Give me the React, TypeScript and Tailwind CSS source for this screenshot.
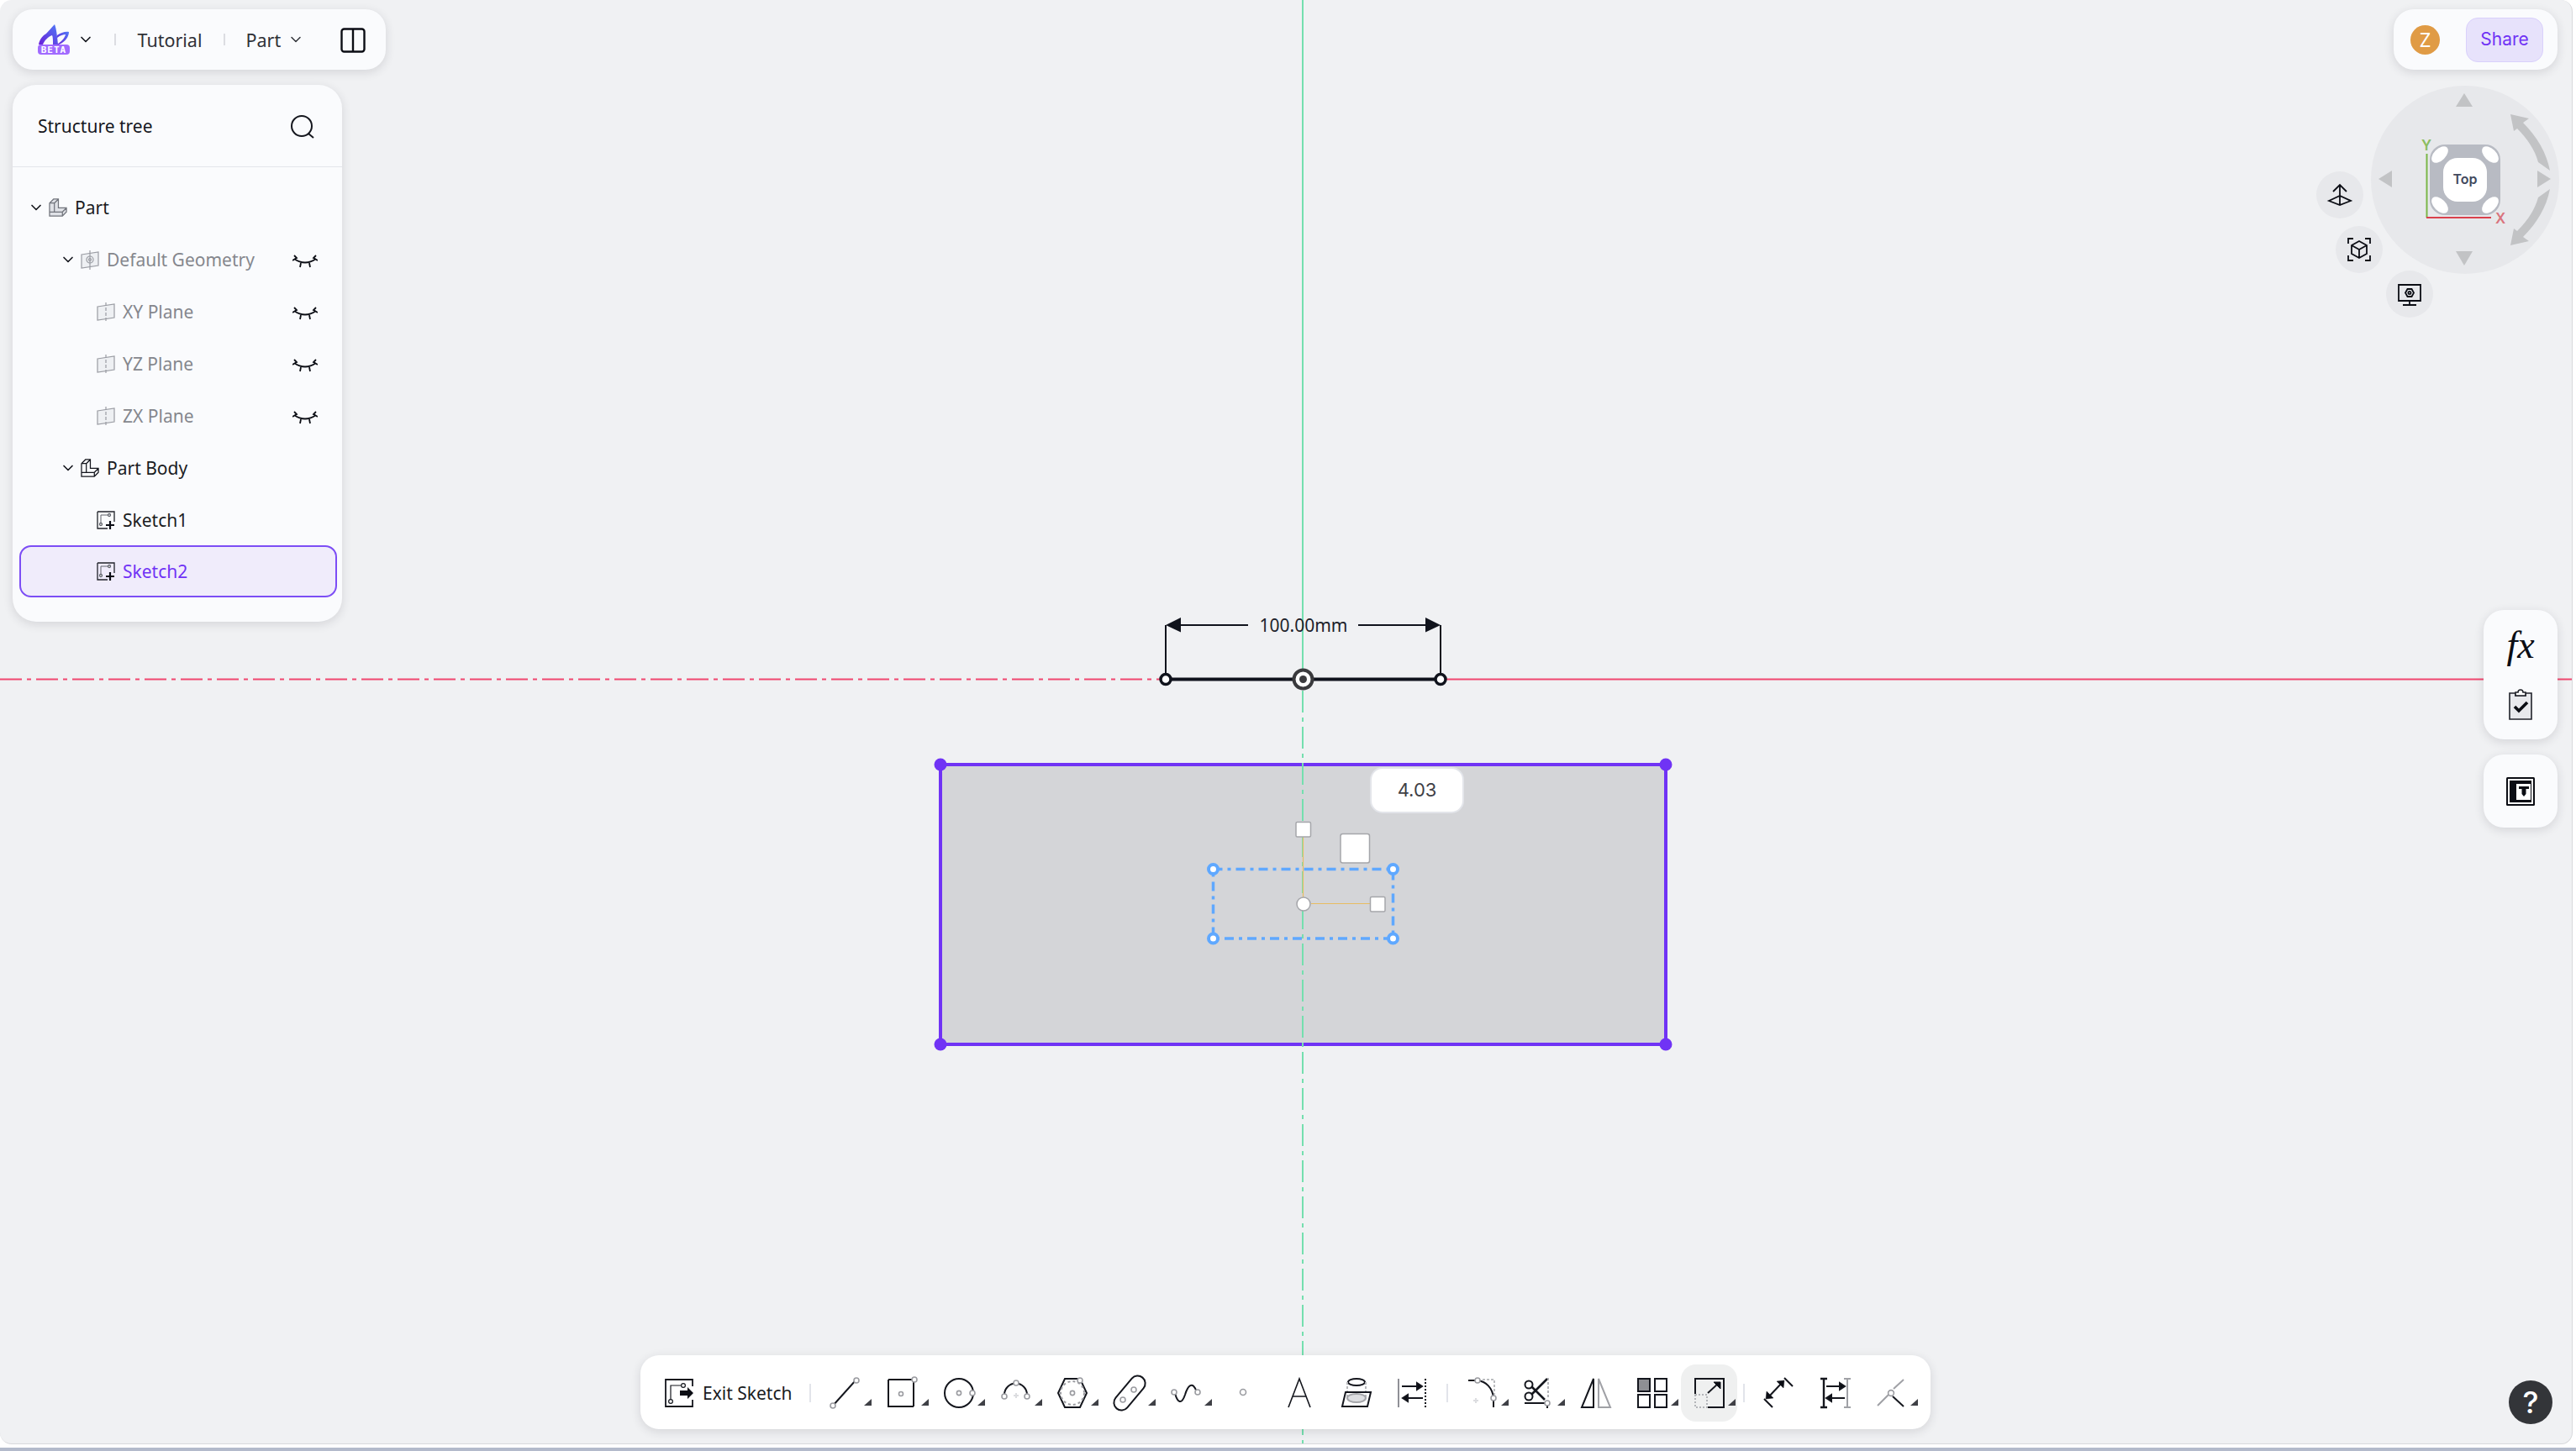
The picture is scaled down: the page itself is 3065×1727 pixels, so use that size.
import React from 'react';
import { ChevronDown } from 'lucide-react';

const font = { fontFamily: '"Noto Sans", sans-serif' };

const Caret = () => (
  <svg width="9" height="8" viewBox="0 0 9 8" className="absolute left-[56px] top-[41px]">
    <path d="M9 0V8H0Z" fill="#3f4046" />
  </svg>
);

const Dot = ({ x, y, r = 3 }: { x: number; y: number; r?: number }) => (
  <circle cx={x} cy={y} r={r} fill="#fff" stroke="#9b9ca1" strokeWidth="1.6" />
);

const Closed = () => (
  <svg width="30" height="16" viewBox="0 0 30 16" fill="none" stroke="#0b0d14" strokeWidth="1.8" className="mt-[4px]">
    <path d="M2 5Q15 14 28 5M0 7L5 4L2 1M30 7L25 4L28 1M10 10L9 15M20 10L21 15" />
  </svg>
);

const PlaneIcon = ({ target }: { target?: boolean }) => (
  <svg width="22" height="23" viewBox="0 0 22 23" fill="none" stroke="#9a9ca3" strokeWidth="1.2">
    <path d="M1 5L21 2V18L1 21Z" fill="#eef0f3" />
    <path d="M11 0V23" strokeDasharray={target ? undefined : '4 2'} />
    {target && <circle cx="11" cy="11" r="4" />}
    {target && <circle cx="11" cy="11" r="1.5" />}
  </svg>
);

const BodyIcon = ({ dim }: { dim?: boolean }) => (
  <svg width="22" height="22" viewBox="0 0 23 23" fill={dim ? '#dfe1e6' : 'none'} stroke={dim ? '#71747c' : '#14161d'} strokeWidth="1.3">
    <path d="M1 22V6L6 1H12V12H22V17L17 22ZM1 6H7V17H1M7 6L12 1M7 17H17V22M17 17L22 12" />
  </svg>
);

const SketchIcon = () => (
  <svg width="22" height="22" viewBox="0 0 22 22" fill="none" stroke="#20222a" strokeWidth="1.3">
    <path d="M1 1H21V13M13 21H1V1" />
    <path d="M5 16V5H15" strokeWidth="1" stroke="#60636b" />
    <circle cx="5" cy="16" r="1.5" stroke="#60636b" fill="#fff" />
    <circle cx="15" cy="5" r="1.5" stroke="#60636b" fill="#fff" />
    <path d="M16 12V22M11 17H21" strokeWidth="2.2" stroke="#0b0d14" />
  </svg>
);

const Chevron = () => <ChevronDown size={20} strokeWidth={2} className="text-[#15171e]" />;

const rows = [
  { label: 'Part', pad: 'pl-[17.5px]', chev: true, icon: <BodyIcon dim />, text: 'text-[#1a1c22]' },
  { label: 'Default Geometry', pad: 'pl-[55.5px]', chev: true, icon: <PlaneIcon target />, text: 'text-[#85878d]', eye: true },
  { label: 'XY Plane', pad: 'pl-[100px]', icon: <PlaneIcon />, text: 'text-[#85878d]', eye: true },
  { label: 'YZ Plane', pad: 'pl-[100px]', icon: <PlaneIcon />, text: 'text-[#85878d]', eye: true },
  { label: 'ZX Plane', pad: 'pl-[100px]', icon: <PlaneIcon />, text: 'text-[#85878d]', eye: true },
  { label: 'Part Body', pad: 'pl-[55.5px]', chev: true, icon: <BodyIcon />, text: 'text-[#1a1c22]' },
  { label: 'Sketch1', pad: 'pl-[100px]', icon: <SketchIcon />, text: 'text-[#1a1c22]' },
];

const Row = ({ row }: { row: (typeof rows)[number] }) => (
  <div className={`flex h-[62px] items-center gap-[9px] pr-[29px] ${row.pad}`}>
    {row.chev && <span className="-mr-[3.5px] flex w-[20px]"><Chevron /></span>}
    {row.icon}
    <span className={`mt-[2px] text-[21px] ${row.text}`}>{row.label}</span>
    {row.eye && <span className="ml-auto flex"><Closed /></span>}
  </div>
);

type ToolDef = { icon: React.ReactNode; caret?: boolean; active?: boolean };

const s = { fill: 'none', stroke: '#14161d', strokeWidth: 2 };

const tools: ToolDef[] = [
  { caret: true, icon: <g {...s}><path d="M3 33L30 3" /><Dot x={3} y={33} r={3} /><Dot x={31} y={3} r={3} /></g> },
  { caret: true, icon: <g {...s}><path d="M1 2H31M31 34H1V2M31 2V34" /><Dot x={16} y={19} r={2.5} /><Dot x={32} y={2} r={3} /></g> },
  { caret: true, icon: <g {...s}><circle cx="18" cy="18" r="17" /><Dot x={18} y={18} r={2.6} /><Dot x={34} y={18} r={3} /></g> },
  { caret: true, icon: <g {...s}><path d="M4 20A13.5 13.5 0 0 1 31 20" /><path d="M18 18V24M15 21H21" stroke="#dcdde0" /><Dot x={4} y={22} r={3} /><Dot x={18} y={6} r={3} /><Dot x={31} y={22} r={3} /></g> },
  { caret: true, icon: <g {...s}><path d="M9 1H27L35 18L27 35H9L1 18Z" /><circle cx="18" cy="18" r="14" stroke="#9b9ca1" strokeDasharray="3 3" /><Dot x={18} y={18} r={2.6} /><Dot x={27} y={3} r={3} /></g> },
  { caret: true, icon: <g {...s}><rect x="-6" y="9" width="48" height="18" rx="9" transform="rotate(-50 18 18)" /><Dot x={23} y={14} r={3} /><Dot x={10} y={26} r={3} /></g> },
  { caret: true, icon: <g {...s}><path d="M5 18C8 30 13 32 17 20C20 10 26 2 31 17" /><Dot x={4} y={17} r={3} /><Dot x={32} y={17} r={3} /></g> },
  { icon: <Dot x={18} y={17} r={3.5} /> },
  { icon: <path d="M5 35L18 1L31 35M10 22H26" fill="none" stroke="#14161d" strokeWidth="1.6" /> },
  { icon: <g {...s}><ellipse cx="18" cy="5" rx="10" ry="4" /><path d="M7 5V24M29 5V24" stroke="#b5b6ba" strokeDasharray="3 2" /><path d="M5 17H35L31 34H1Z" /><ellipse cx="18" cy="24" rx="11" ry="5" stroke="#a5a6aa" fill="#dedfe2" /></g> },
  { icon: <g {...s}><path d="M1 1V35" stroke="#8f9096" /><path d="M33 1V35" strokeDasharray="2 2" /><path d="M5 10H25M30 24H10" /><path d="M23 6L29 10L23 14ZM12 20L6 24L12 28Z" fill="#0b0d14" /></g> },
];

const tools2: ToolDef[] = [
  { caret: true, icon: <g {...s}><path d="M1 3H12C22 4 30 12 31 24V35" /><path d="M18 2H32V20" stroke="#a5a6aa" strokeDasharray="3 2" strokeWidth="1.5" /><path d="M10 24V30M7 27H13" stroke="#dcdde0" /><Dot x={12} y={3} r={3} /><Dot x={31} y={24} r={3} /></g> },
  { caret: true, icon: <g {...s}><circle cx="6" cy="8" r="4.5" /><circle cx="6" cy="22" r="4.5" /><path d="M9 20L28 1M9 10L25 26" strokeWidth="2.6" /><path d="M29 0V24" stroke="#9b9ca1" strokeDasharray="3 2" strokeWidth="1.5" /><path d="M1 30H28M28 30V36" /><Dot x={28} y={30} r={3} /></g> },
  { icon: <g {...s}><path d="M15 1V35H1Z" /><path d="M21 1V35H35Z" stroke="#a0a1a6" /></g> },
  { caret: true, icon: <g {...s}><rect x="1" y="1" width="14" height="15" fill="#8e8f94" /><rect x="21" y="1" width="14" height="15" /><rect x="1" y="20" width="14" height="15" /><rect x="21" y="20" width="14" height="15" /></g> },
  { caret: true, active: true, icon: <g {...s}><path d="M1 19V1H35V35H16" /><path d="M1 20H15V35H1Z" stroke="#a0a1a6" strokeDasharray="2 2" strokeWidth="1.5" /><path d="M16 18L29 6" /><path d="M23 5H31V13Z" fill="#0b0d14" strokeWidth="1" /></g> },
];

const tools3: ToolDef[] = [
  { icon: <g {...s}><path d="M5 24L23 5" /><path d="M25 0L35 10M1 25L11 35" /><path d="M25 3L24 12L16 4ZM3 25L4 16L12 24Z" fill="#0b0d14" strokeWidth="0.5" /></g> },
  { icon: <g {...s}><path d="M4 1V35M0 1H8M0 35H8" strokeWidth="2.4" /><path d="M32 1V35M28 1H36M28 35H36" stroke="#a0a1a6" /><path d="M7 10H25M29 24H11" /><path d="M23 6L29 10L23 14ZM13 20L7 24L13 28Z" fill="#0b0d14" /></g> },
  { caret: true, icon: <g {...s}><path d="M1 33L15 19M20 13L32 2" stroke="#a0a1a6" /><path d="M19 22L32 34" /><Dot x={17} y={18} r={3.4} /></g> },
];

const Tool = ({ tool }: { tool: ToolDef }) => (
  <div className="relative flex h-[68px] w-[67.5px] items-center justify-center">
    {tool.active && <div className="absolute inset-0 rounded-[18px] bg-[#eff0f0]" />}
    <svg width="36" height="36" viewBox="0 0 36 36" className="relative overflow-visible">{tool.icon}</svg>
    {tool.caret && <Caret />}
  </div>
);

const Sep = () => <div className="mx-[6.5px] h-[22px] w-[2px] bg-[#e2e4ea]" />;

const panel = 'bg-[#fafbfd] shadow-[0_3px_12px_rgba(40,44,60,0.14)]';

const Canvas = () => (
  <svg width="3060" height="1719" viewBox="0 0 3060 1719" className="absolute left-0 top-0">
    <path d="M0 808.5H1387" stroke="#f0476f" strokeWidth="2" strokeDasharray="26 6 5 6" fill="none" />
    <path d="M1714 808.5H3060" stroke="#f0476f" strokeWidth="2" fill="none" />
    <rect x="1119" y="910" width="863" height="333" fill="#d4d5d8" stroke="#7033f5" strokeWidth="4" />
    <path d="M1550 0V808" stroke="#74dfae" strokeWidth="2" fill="none" />
    <path d="M1550 822V1719" stroke="#74dfae" strokeWidth="2" strokeDasharray="26 6 5 6" fill="none" />
    {[[1119, 910], [1982, 910], [1119, 1243], [1982, 1243]].map(([x, y]) => (
      <circle key={`${x}-${y}`} cx={x} cy={y} r="7.5" fill="#7033f5" />
    ))}
    <path d="M1387 744V808M1714 744V808" stroke="#10131c" strokeWidth="2" fill="none" />
    <path d="M1405 744H1485M1616 744H1696" stroke="#10131c" strokeWidth="2" fill="none" />
    <path d="M1387 744L1405 735V752.5ZM1714 744L1696 735V752.5Z" fill="#10131c" />
    <text x="1551" y="751.5" textAnchor="middle" fontSize="21" fill="#20222b" style={font}>100.00mm</text>
    <path d="M1387 808.5H1714" stroke="#10131c" strokeWidth="4" fill="none" />
    <circle cx="1387" cy="808.5" r="6" fill="#fff" stroke="#10131c" strokeWidth="3.5" />
    <circle cx="1714" cy="808.5" r="6" fill="#fff" stroke="#10131c" strokeWidth="3.5" />
    <circle cx="1550.5" cy="808.5" r="11" fill="#fff" stroke="#3a3a3d" strokeWidth="4" />
    <circle cx="1550.5" cy="808.5" r="4.5" fill="#3a3a3d" />
    <path d="M1550.5 996V1068M1560 1075.5H1630" stroke="#e8bd62" strokeWidth="1.2" fill="none" />
    <rect x="1443.5" y="1034.5" width="214" height="82.5" fill="none" stroke="#5fa8ff" strokeWidth="3.5" strokeDasharray="11 6 4 6" />
    {[[1443.5, 1034.5], [1657.5, 1034.5], [1443.5, 1117], [1657.5, 1117]].map(([x, y]) => (
      <circle key={`${x}-${y}`} cx={x} cy={y} r="5.5" fill="#fff" stroke="#5fa8ff" strokeWidth="4" />
    ))}
    <g fill="#fff" stroke="#a5a6aa" strokeWidth="1.5">
      <rect x="1542" y="978.5" width="17.5" height="17.5" rx="1.5" />
      <rect x="1595" y="992.5" width="34.5" height="34.5" rx="2.5" />
      <rect x="1630.5" y="1067.5" width="17.5" height="17.5" rx="1.5" />
      <circle cx="1551" cy="1076" r="8" />
    </g>
  </svg>
);

const NavWidget = () => (
  <svg width="300" height="284" viewBox="2750 100 300 284" className="block">
    <circle cx="2933" cy="214" r="112" fill="#e7e8eb" />
    <circle cx="2784" cy="232" r="28" fill="#e7e8eb" />
    <circle cx="2807" cy="297" r="28" fill="#e7e8eb" />
    <circle cx="2867" cy="350" r="28" fill="#e7e8eb" />
    <g fill="#c2c3c5">
      <path d="M2932 111L2942 127H2922Z" />
      <path d="M2932 316L2922 299H2942Z" />
      <path d="M2830 213L2846 203V223Z" />
      <path d="M3035 213L3019 203V223Z" />
      <path d="M2987 136L3009 141L3002 146C3019 163 3030 182 3034 203L3020 193C3016 178 3007 165 2995 153L2991 156Z" />
      <path d="M2987 292L3009 287L3002 282C3019 265 3030 246 3034 225L3020 235C3016 250 3007 263 2995 275L2991 272Z" />
    </g>
    <rect x="2891" y="172" width="84" height="84" rx="18" fill="#b8bbc3" />
    <g fill="#fff">
      <ellipse cx="2903" cy="184" rx="12" ry="7" transform="rotate(-45 2903 184)" />
      <ellipse cx="2963" cy="184" rx="12" ry="7" transform="rotate(45 2963 184)" />
      <ellipse cx="2903" cy="244" rx="12" ry="7" transform="rotate(45 2903 244)" />
      <ellipse cx="2963" cy="244" rx="12" ry="7" transform="rotate(-45 2963 244)" />
      <rect x="2907" y="188" width="52" height="52" rx="17" />
    </g>
    <text x="2933" y="219" textAnchor="middle" fontSize="16" fontWeight="600" fill="#434a5e" style={{ fontFamily: 'Inter, sans-serif' }}>Top</text>
    <path d="M2887.5 183V259" stroke="#7ab648" strokeWidth="2" />
    <path d="M2887 259H2964" stroke="#d9414d" strokeWidth="2" />
    <text x="2887" y="179" textAnchor="middle" fontSize="17" fontWeight="600" fill="#8cbd5f" style={{ fontFamily: 'Inter, sans-serif' }}>Y</text>
    <text x="2975" y="266" textAnchor="middle" fontSize="17" fontWeight="600" fill="#d9737d" style={{ fontFamily: 'Inter, sans-serif' }}>X</text>
    <g fill="none" stroke="#0b0d14" strokeWidth="1.8">
      <path d="M2784 220V243M2776 228L2784 220L2792 228M2771 239L2784 233L2797 239L2784 244Z" />
      <path d="M2794 290V284H2800M2814 284H2820V290M2820 304V310H2814M2800 310H2794V304" />
      <path d="M2807 287L2816 292V302L2807 307L2798 302V292ZM2798 292L2807 297L2816 292M2807 297V307" />
      <path d="M2854 339H2880V358H2854ZM2867 358V363M2859 363H2875" />
      <path d="M2862 348.5L2864.5 344H2869.5L2872 348.5L2869.5 353H2864.5Z" />
      <circle cx="2867" cy="348.5" r="1.6" />
    </g>
  </svg>
);

export default function App() {
  return (
    <div className="relative h-[1727px] w-[3065px] overflow-hidden bg-white" style={font}>
      <div className="absolute bottom-0 left-0 right-0 h-[4px] bg-[#b3bacb]" />
      <div className="relative h-[1719px] w-[3061px] overflow-hidden rounded-[14px] border-b border-r border-[#d8d9dc] bg-[#f0f1f3]">
        <Canvas />

        {/* top left */}
        <div className="absolute left-[15px] top-[11px] flex flex-col gap-[18px]">
          <div className={`flex h-[72px] w-[444px] items-center rounded-[24px] pl-[30px] pr-[24px] ${panel}`}>
            <svg width="38" height="38" viewBox="0 0 38 38">
              <defs>
                <linearGradient id="logo" x1="0" y1="1" x2="1" y2="0">
                  <stop offset="0" stopColor="#6a1fd8" />
                  <stop offset="1" stopColor="#4f7cf7" />
                </linearGradient>
              </defs>
              <path d="M1 25C2 19 6 14 10 12C13 9 16 5 20 1C22 6 23 14 24 25H18C18 20 18 16 17 14C12 16 8 20 6 25Z" fill="url(#logo)" />
              <path d="M23 14C27 11 33 9 37 10C37 15 33 22 25 25H23C27 22 32 18 33 13C30 13 27 14 23 17Z" fill="url(#logo)" />
              <rect x="0" y="25" width="38" height="12" rx="4" fill="#a16bff" />
              <text x="19" y="35" textAnchor="middle" fontSize="11" fontWeight="700" fill="#fff" letterSpacing="1" style={{ fontFamily: '"DejaVu Sans Mono", monospace' }}>BETA</text>
            </svg>
            <ChevronDown size={20} strokeWidth={2} className="ml-[8.5px] text-[#15171e]" />
            <div className="ml-[24px] h-[14px] w-[2px] bg-[#dcdde2]" />
            <span className="ml-[26px] mt-[3px] text-[21.5px] text-[#2f3137]">Tutorial</span>
            <div className="ml-[26px] h-[14px] w-[2px] bg-[#dcdde2]" />
            <span className="ml-[24px] mt-[3px] text-[21.5px] text-[#2f3137]">Part</span>
            <ChevronDown size={20} strokeWidth={1.8} className="ml-[8px] text-[#33353b]" />
            <svg width="30" height="30" viewBox="0 0 30 30" fill="none" stroke="#0b0d14" strokeWidth="2.4" className="ml-auto mt-[2px]">
              <rect x="1.5" y="1.5" width="27" height="27" rx="3" />
              <path d="M15 1.5V28.5" />
            </svg>
          </div>
          <div className={`w-[392px] rounded-[28px] pb-[29px] ${panel}`}>
            <div className="flex h-[98px] items-center justify-between border-b border-[#e3e5ea] pl-[30px] pr-[33px]">
              <span className="mt-[3px] text-[21px] text-[#15171e]">Structure tree</span>
              <svg width="28" height="28" viewBox="0 0 28 28" fill="none" stroke="#15171e" strokeWidth="2" className="mt-[3px]">
                <circle cx="13" cy="13" r="12" />
                <path d="M21 22L27 27" />
              </svg>
            </div>
            <div className="flex flex-col">
              <div className="h-[17px]" />
              {rows.map((row) => (
                <Row key={row.label} row={row} />
              ))}
              <div className="ml-[8px] mr-[6px] -mt-[1px] flex h-[62px] items-center gap-[9px] rounded-[14px] border-2 border-[#7c4df5] bg-[#f0ecfb] pl-[90px]">
                <SketchIcon />
                <span className="mt-[2px] text-[21px] text-[#7033f5]">Sketch2</span>
              </div>
            </div>
          </div>
        </div>

        {/* top right */}
        <div className="absolute right-[17px] top-[11px] flex flex-col items-end gap-[17px]">
          <div className={`flex h-[72px] w-[195px] items-center justify-between rounded-[24px] pl-[20px] pr-[17px] ${panel}`}>
            <div className="flex h-[35px] w-[35px] items-center justify-center rounded-full bg-[#e09b45] text-[23px] text-white">Z</div>
            <div className="flex h-[53px] w-[92px] items-center justify-center rounded-[14px] border border-[#d9d0fb] bg-[#e7e2fb] text-[21px] text-[#7033f5]" style={{ fontFamily: 'Inter, sans-serif' }}>Share</div>
          </div>
          <div className="-mr-[7px]">
            <NavWidget />
          </div>
        </div>

        {/* right tools */}
        <div className="absolute right-[17px] top-[726px] flex flex-col gap-[18px]">
          <div className={`flex h-[154px] w-[88px] flex-col items-center rounded-[24px] pt-[18px] ${panel}`}>
            <span className="h-[50px] text-[46px] italic leading-[48px] text-[#0b0d14]" style={{ fontFamily: '"Liberation Serif", serif' }}>fx</span>
            <svg width="28" height="38" viewBox="0 0 28 38" className="mt-[25px]" fill="none" stroke="#20222a" strokeWidth="1.6">
              <path d="M1 6H8V9H20V6H27V37H1Z" fill="#e8e9ed" />
              <path d="M8 9V5H11C11 1 17 1 17 5H20V9Z" fill="#fff" />
              <path d="M7 22L12 27L22 17" strokeWidth="3.6" stroke="#0b0d14" />
            </svg>
          </div>
          <div className={`flex h-[87px] w-[88px] items-center justify-center rounded-[24px] ${panel}`}>
            <svg width="34" height="34" viewBox="0 0 34 34">
              <rect width="34" height="34" rx="1.5" fill="#0b0d14" />
              <rect x="3" y="3" width="28" height="28" fill="none" stroke="#fff" strokeWidth="2" />
              <rect x="12" y="8" width="17" height="19" fill="#fff" />
              <path d="M15 11H27V14H23.5V20L21 23L18.5 20V14H15Z" fill="#0b0d14" />
            </svg>
          </div>
        </div>

        {/* sketch toolbar */}
        <div className="absolute left-[762px] top-[1613px] flex h-[88px] w-[1535px] items-center rounded-[22px] bg-white pl-[29px] pt-[2px] shadow-[0_3px_12px_rgba(40,44,60,0.14)]">
          <svg width="34" height="34" viewBox="0 0 34 34" fill="none" stroke="#14161d" strokeWidth="1.8">
            <path d="M33 9V1H1V33H33V25" />
            <path d="M7 27V8H19" strokeWidth="1.2" />
            <circle cx="7" cy="27" r="2.4" fill="#fff" strokeWidth="1.2" />
            <circle cx="22" cy="8" r="2.4" fill="#fff" strokeWidth="1.2" />
            <path d="M18 14H27V10L34 17L27 24V20H18Z" fill="#0b0d14" stroke="none" />
          </svg>
          <span className="ml-[11px] mt-[2px] text-[21px] text-[#1a1c22]">Exit Sketch</span>
          <div className="ml-[21px] mr-[7px] h-[22px] w-[2px] bg-[#e2e4ea]" />
          {tools.map((tool, i) => <Tool key={i} tool={tool} />)}
          <Sep />
          {tools2.map((tool, i) => <Tool key={i} tool={tool} />)}
          <Sep />
          {tools3.map((tool, i) => <Tool key={i} tool={tool} />)}
        </div>

        {/* canvas dimension box */}
        <div className="absolute left-[1630px] top-[913px] flex h-[55px] w-[112px] items-center justify-center rounded-[15px] border-2 border-[#e3e5ea] bg-white text-[22px] text-[#3f4046]" style={{ fontFamily: 'Inter, sans-serif' }}>4.03</div>

        <div className="absolute left-[2985px] top-[1643px] flex h-[52px] w-[52px] items-center justify-center rounded-full bg-[#333539] text-[36px] font-medium text-white" style={{ fontFamily: 'Inter, sans-serif' }}>?</div>
      </div>
    </div>
  );
}
